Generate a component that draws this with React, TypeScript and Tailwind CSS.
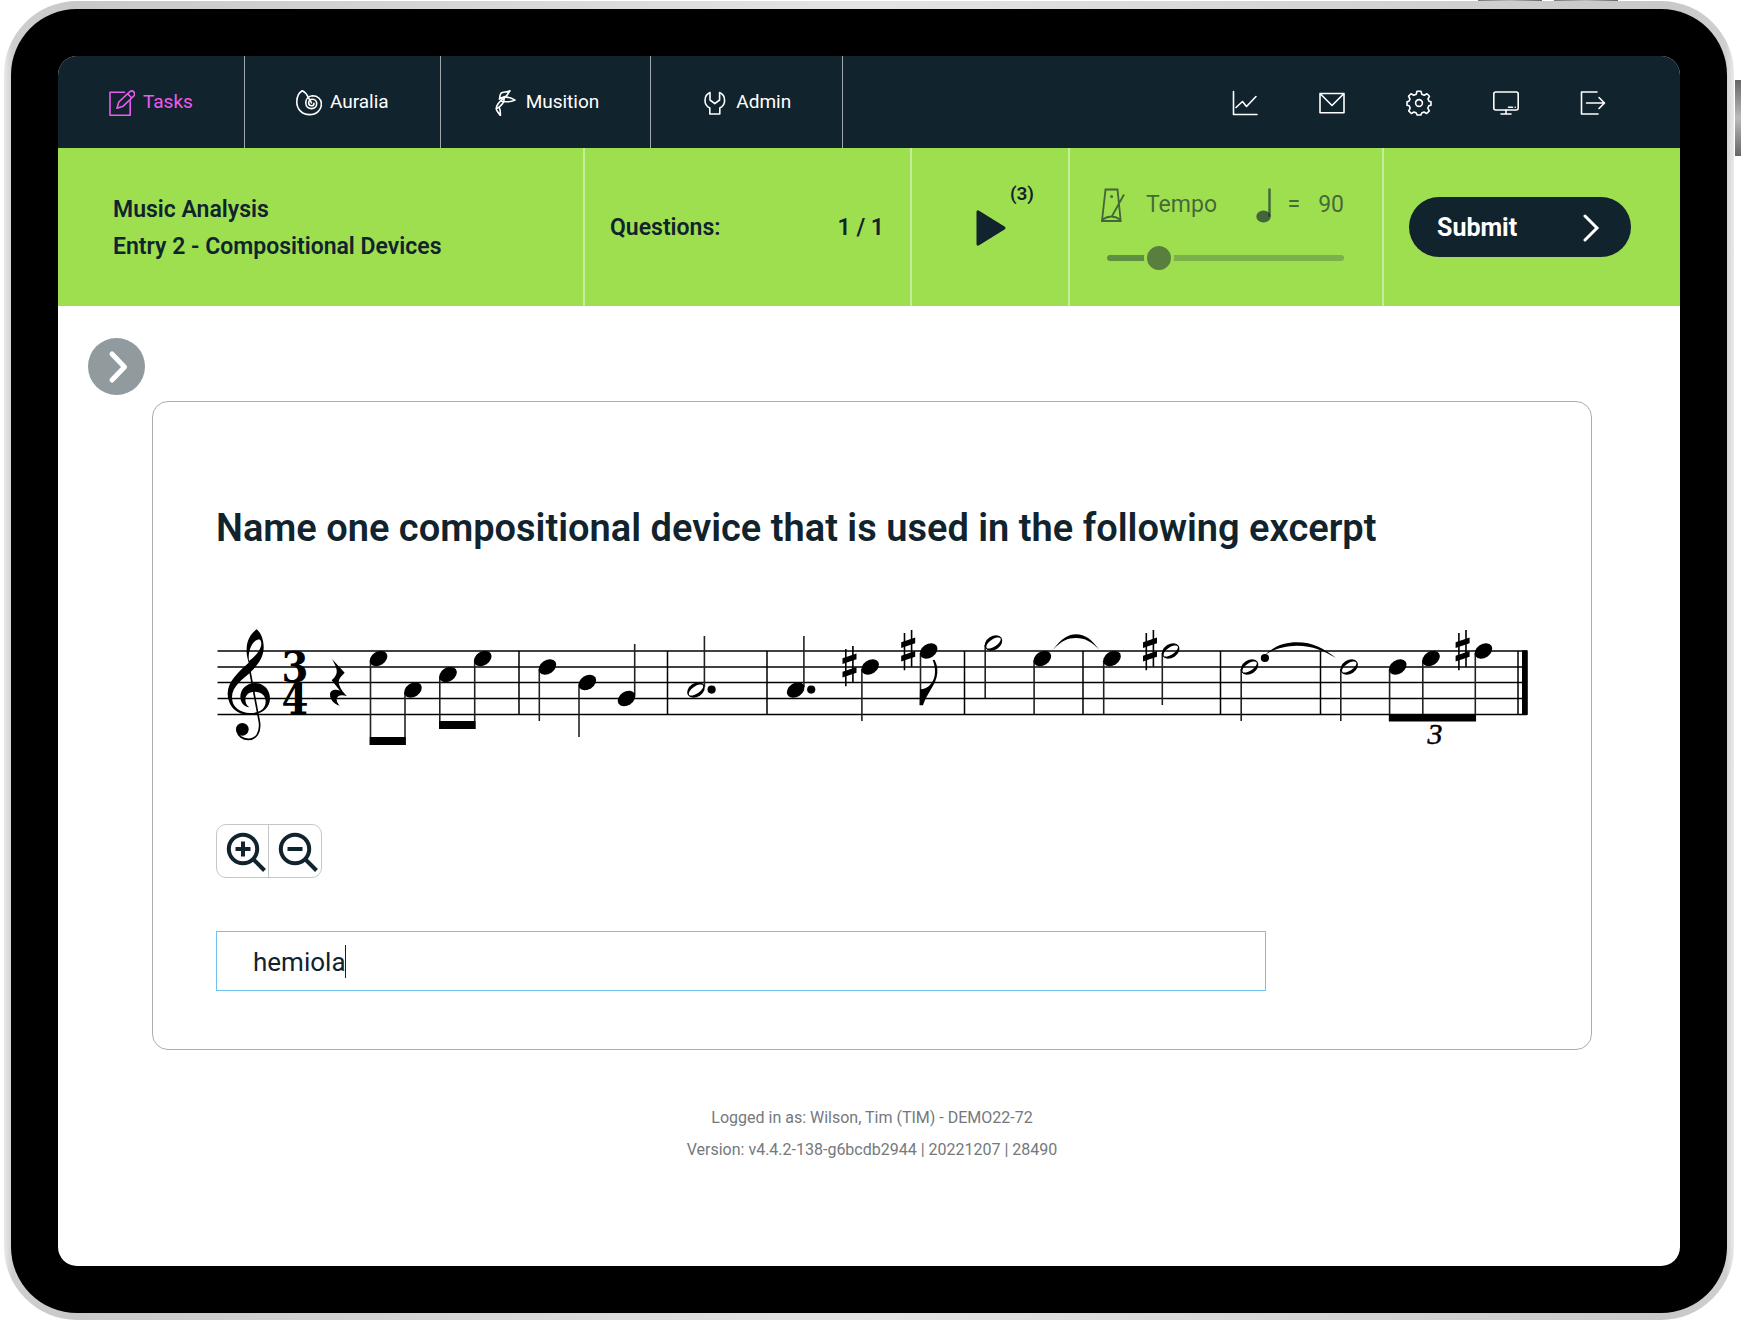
import { useState } from "react";
import type { ReactNode } from "react";

interface IconProps {
  children: ReactNode;
  className?: string;
}

function Icon({ children, className = "mt-0.5 size-[26px]" }: IconProps) {
  return (
    <svg
      viewBox="0 0 26 26"
      className={className}
      fill="none"
      stroke="currentColor"
      strokeWidth="1.6"
      strokeLinecap="round"
      strokeLinejoin="round"
      aria-hidden="true"
    >
      {children}
    </svg>
  );
}

const NAV_ITEMS = [
  {
    label: "Tasks",
    active: true,
    icon: (
      <Icon>
        <path d="M15.5 2.2H1V25.2H21.2V11" />
        <path d="M8 18.2 9.8 12 20.6 1.9a2.9 2.9 0 0 1 4.2 4.1L14.2 16.2ZM18.6 3.8l4.2 4.2" />
      </Icon>
    ),
  },
  {
    label: "Auralia",
    active: false,
    icon: (
      <Icon>
        <path d="M6.3.8C2 3 .8 8 .8 12c0 7.5 5.7 12.6 12.5 12.6 7.2 0 12.1-4.6 12.1-10.6 0-5-3.9-8.2-8.9-8.2-4 .2-6.7 3.2-6.7 7 0 3.8 2.7 5.8 5.7 5.8 3.5 0 5.2-2.6 5.2-5.2 0-2.6-2.2-4.2-4.5-4.2-2.2 0-3.5 1.6-3.5 3.6s1.3 3 2.9 3c1.4 0 2.3-1 2.3-2.4" />
        <path d="M6.3.8C9 2 10.6 4 12 6.8l3.5 6" />
      </Icon>
    ),
  },
  {
    label: "Musition",
    active: false,
    icon: (
      <Icon>
        <path d="M18 .8C14.5 2.6 11 1.4 9 3.2 7.4 5 8.2 7.6 7.4 9.2 9.6 7 12.4 7.2 14.4 6Z" />
        <path d="M9.4 8.2C14 6 19 7.6 23 10.1 19 12 14 12 9.6 11.2" />
        <path d="M14 6.4C9.6 9.6 3.6 14 4.3 19.2 4.8 22 7.2 23 8.4 25.6 8 22 9 19.6 7 17.6" />
        <path d="M12.2 8C12.4 13 9.6 16 4.6 18.6" />
      </Icon>
    ),
  },
  {
    label: "Admin",
    active: false,
    icon: (
      <Icon>
        <path d="M8 2.6V10l4.8 3.6L17.6 10V2.6C21 4 22.6 7 22.6 10.4c0 3.6-2 6.2-4.8 7.6v6H7.8v-6C5 16.6 3 14 3 10.4 3 7 4.6 4 8 2.6Z" />
      </Icon>
    ),
  },
];

const TOOL_ITEMS = [
  {
    label: "Reports",
    icon: (
      <Icon>
        <path d="M1.5 1.5V24.5H25M4 17.5l6.5-6 4 5L24 6.5" />
      </Icon>
    ),
  },
  {
    label: "Messages",
    icon: (
      <Icon>
        <path d="M1 3.5H25V22.8H1ZM1.5 4 13 15.5 24.5 4" />
      </Icon>
    ),
  },
  {
    label: "Settings",
    icon: (
      <Icon>
        <circle cx="13" cy="13" r="3.4" />
        <path d="M11 1.2h4l.8 3 2.4 1 2.8-1.5 2.5 2.5L22 9l1 2.2 2 .6v3.4l-2.2.6-1 2.4 1.5 2.7-2.6 2.6L18 22l-2.3 1-.8 2h-3.8l-.8-2-2.3-1-2.7 1.5-2.6-2.6L4.2 18.2l-1-2.4-2.2-.6v-3.4l2-.6L4 9 2.5 6.2 5 3.7 7.8 5.2l2.4-1Z" />
      </Icon>
    ),
  },
  {
    label: "Display",
    icon: (
      <Icon>
        <rect x=".8" y="2" width="24.4" height="18" rx="2" />
        <path d="M13 20v3.3M8 24h10M15.5 17.3h4M22.2 17.3h.1" />
      </Icon>
    ),
  },
  {
    label: "Log out",
    icon: (
      <Icon>
        <path d="M17 2H1.5V24H18M6.5 13H24M19 7.5l5.5 5.5-5.5 5.5" />
      </Icon>
    ),
  },
];

const STAFF_LINES = [651, 667, 682.5, 698.5, 714.5];
const BARLINES = [519, 667.5, 767, 964.5, 1083, 1220.5, 1320.5, 1518];

interface Note {
  x: number;
  y: number;
  stemX: number;
  stemEnd: number;
  half?: boolean;
}

const NOTES: Note[] = [
  { x: 378.5, y: 658.5, stemX: 370.5, stemEnd: 745 },
  { x: 413, y: 690, stemX: 405, stemEnd: 745 },
  { x: 448, y: 674.5, stemX: 439.8, stemEnd: 729 },
  { x: 482.7, y: 658.5, stemX: 474.7, stemEnd: 729 },
  { x: 547.5, y: 667, stemX: 539.3, stemEnd: 721 },
  { x: 587.3, y: 682.5, stemX: 579, stemEnd: 737 },
  { x: 626.5, y: 698.5, stemX: 634.7, stemEnd: 644 },
  { x: 696, y: 690, stemX: 704.4, stemEnd: 636, half: true },
  { x: 795.7, y: 690, stemX: 803.9, stemEnd: 636 },
  { x: 870.2, y: 667, stemX: 861.9, stemEnd: 721 },
  { x: 928.7, y: 651, stemX: 920.5, stemEnd: 705 },
  { x: 993.5, y: 643, stemX: 985.2, stemEnd: 698, half: true },
  { x: 1042.3, y: 658.5, stemX: 1034.1, stemEnd: 714 },
  { x: 1112, y: 658.5, stemX: 1103.7, stemEnd: 714 },
  { x: 1170.7, y: 651, stemX: 1162.3, stemEnd: 705, half: true },
  { x: 1249.6, y: 667, stemX: 1241.2, stemEnd: 721, half: true },
  { x: 1349.2, y: 667, stemX: 1340.8, stemEnd: 721, half: true },
  { x: 1397.8, y: 667, stemX: 1389.6, stemEnd: 721 },
  { x: 1431, y: 658.5, stemX: 1422.8, stemEnd: 721 },
  { x: 1483.5, y: 651, stemX: 1475.3, stemEnd: 721 },
];

const SHARPS = [
  { x: 849.5, y: 666 },
  { x: 908.2, y: 650 },
  { x: 1150, y: 650 },
  { x: 1462.6, y: 650 },
];

const DOTS = [
  { x: 711.6, y: 689.6 },
  { x: 811.2, y: 689.6 },
  { x: 1264.9, y: 658 },
];

function Score() {
  return (
    <svg
      viewBox="216 620 1313 140"
      className="block w-full"
      role="img"
      aria-label="Melody in three four time"
    >
      <g stroke="#000" strokeWidth="1.5">
        {STAFF_LINES.map((y) => (
          <line key={y} x1="217.5" x2="1527" y1={y} y2={y} />
        ))}
        {BARLINES.map((x) => (
          <line key={x} x1={x} x2={x} y1="651" y2="714.5" />
        ))}
      </g>
      <rect x="1522" y="650.4" width="5.8" height="64.5" />

      {/* treble clef and rest */}
      <g transform="translate(200 610) scale(.33333)">
        <path
          fillRule="evenodd"
          d="M170 58C184 70 192 92 191 115C190 145 172 166 152 186C130 207 96 228 96 262C96 292 120 309 150 309C178 309 197 298 197 274C197 257 184 245 163 245C147 245 136 256 136 268C136 279 140 287 148 292C132 290 121 278 121 260C121 238 140 219 165 219C192 219 210 240 210 265C210 295 185 315 148 315C108 315 83 287 83 250C83 215 115 186 146 158C141 140 139 130 140 118C140 95 150 72 170 58ZM147 153C143 125 155 92 177 88C188 92 184 110 178 120C170 134 160 143 147 153Z"
        />
        <path
          d="M149 180 178 335C183 368 168 388 145 388C128 388 114 378 111 362"
          fill="none"
          stroke="#000"
          strokeWidth="5"
        />
        <circle cx="127" cy="358" r="19" />
        <path d="M396 147 434 188C422 200 412 210 418 226C422 238 432 250 441 259C425 253 411 256 410 268C410 276 414 282 419 287C402 282 390 268 390 254C390 241 404 236 420 242L395 211C407 200 412 190 410 180C408 168 402 158 396 147Z" />
      </g>

      <g
        className="font-['DejaVu_Serif_Condensed','Liberation_Serif',serif] font-bold"
        fontSize="43"
        textAnchor="middle"
      >
        <text x="295" y="682">
          3
        </text>
        <text x="295" y="714">
          4
        </text>
      </g>

      {NOTES.map((note) => (
        <g key={note.x}>
          <line
            x1={note.stemX}
            x2={note.stemX}
            y1={note.y + (note.stemEnd > note.y ? 2 : -3)}
            y2={note.stemEnd}
            stroke="#222"
            strokeWidth="1.6"
          />
          <path
            transform={`translate(${note.x} ${note.y}) rotate(-34)`}
            fillRule="evenodd"
            d={
              note.half
                ? "M-9.6 0a9.6 6.85 0 1 0 19.2 0a9.6 6.85 0 1 0-19.2 0ZM-8.4 0a8.4 3.7 0 1 0 16.8 0a8.4 3.7 0 1 0-16.8 0Z"
                : "M-9.6 0a9.6 6.85 0 1 0 19.2 0a9.6 6.85 0 1 0-19.2 0Z"
            }
          />
        </g>
      ))}

      {/* beams */}
      <rect x="369.7" y="737" width="36" height="8" />
      <rect x="439" y="721" width="36.5" height="8" />
      <rect x="1389" y="714" width="87" height="7.5" />

      {SHARPS.map((sharp) => (
        <g key={sharp.x} transform={`translate(${sharp.x} ${sharp.y})`}>
          <path d="M-3.7-17V20.3M3.4-20V17" stroke="#000" strokeWidth="1.6" />
          <path d="M-7-7.8 7-12.5V-6.8L-7-2ZM-7 5.7 7 1V6.7L-7 11.5Z" />
        </g>
      ))}
      {DOTS.map((dot) => (
        <circle key={dot.x} cx={dot.x} cy={dot.y} r="4.1" />
      ))}

      {/* flag and ties */}
      <g transform="translate(800 610) scale(.33333)">
        <path d="M360 238C385 238 405 215 405 185C405 172 403 162 398 150L404 150C410 162 413 172 412 188C410 222 380 250 369 286L359 286Z" />
        <path d="M758 120C785 85 805 73 828 73C855 73 875 88 898 120C875 95 855 84 828 84C803 84 785 92 758 120Z" />
        <path d="M1395 135C1425 105 1460 97 1490 97C1540 97 1570 115 1608 144C1570 122 1540 108 1490 107C1455 108 1425 115 1395 135Z" />
      </g>
      <text
        x="1435"
        y="744"
        textAnchor="middle"
        fontSize="30"
        stroke="#000"
        strokeWidth=".5"
        className="font-['Liberation_Serif',serif] italic"
      >
        3
      </text>
    </svg>
  );
}

function TopNav() {
  return (
    <header className="flex h-[92px] bg-[#11232d] text-[19px] text-white">
      <nav className="flex">
        {NAV_ITEMS.map((item) => (
          <a
            key={item.label}
            href="#"
            className={`flex items-center gap-2 border-r border-[#a0a7ab] px-[51px] ${
              item.active ? "text-[#ea5cf0]" : ""
            }`}
          >
            {item.icon}
            {item.label}
          </a>
        ))}
      </nav>
      <div className="ml-auto flex items-center gap-[61px] pr-[74px]">
        {TOOL_ITEMS.map((item) => (
          <button key={item.label} type="button" aria-label={item.label}>
            {item.icon}
          </button>
        ))}
      </div>
    </header>
  );
}

function TaskBar() {
  const [tempo, setTempo] = useState(90);

  return (
    <section className="grid h-[158px] grid-cols-[527fr_327fr_158fr_314fr_296fr] divide-x-2 divide-[#c6ee98] bg-[#9edf50] text-[23px] font-semibold text-[#11232d]">
      <div className="flex flex-col justify-center pt-0.5 pl-[55px] leading-[37px]">
        <p>Music Analysis</p>
        <p>Entry 2 - Compositional Devices</p>
      </div>
      <div className="flex items-center justify-between pt-0.5 pr-[26px] pl-[25px]">
        <span>Questions:</span>
        <span>1 / 1</span>
      </div>
      <div className="relative flex items-center justify-center pt-0.5 pl-0.5">
        <button type="button" aria-label="Play">
          <svg viewBox="0 0 30 36" className="h-9 w-[30px]" fill="currentColor" aria-hidden="true">
            <path d="M.5 2.2Q.5-.8 3.5 1L28.5 16.5Q30.5 18 28.5 19.5L3.5 35Q.5 36.8.5 33.8Z" />
          </svg>
        </button>
        <span className="absolute top-8 right-[34px] text-[19px] leading-7">(3)</span>
      </div>
      <div className="flex flex-col gap-8 pt-[39px] pr-[38px] pl-[31px] font-normal text-[#11232d]/65">
        <div className="flex items-center">
          <svg
            viewBox="0 0 24 36"
            className="h-9 w-6"
            fill="none"
            stroke="currentColor"
            strokeWidth="1.8"
            aria-hidden="true"
          >
            <path d="M4.5 2.5H16.5L19.7 34H1ZM10.5 30 23 7.5M1.5 32.5Q10.5 26.5 19 32.5" />
            <circle cx="10.6" cy="9.5" r=".6" />
          </svg>
          <label htmlFor="tempo" className="ml-[21px]">
            Tempo
          </label>
          <svg viewBox="0 0 16 36" className="ml-auto h-9 w-4" fill="currentColor" aria-hidden="true">
            <ellipse cx="7.5" cy="29.5" rx="7.2" ry="6" />
            <path d="M12.3 1.5H14.7V29.5H12.3Z" />
          </svg>
          <span className="ml-4">=</span>
          <output htmlFor="tempo" className="ml-[18px]">
            {tempo}
          </output>
        </div>
        <input
          id="tempo"
          type="range"
          min={40}
          max={320}
          value={tempo}
          onChange={(event) => setTempo(Number(event.target.value))}
          className="ml-1.5 h-[6px] appearance-none rounded-full bg-linear-to-r from-[#5f8f40] from-22% to-[#7cb04b] to-22% [&::-webkit-slider-thumb]:size-[30px] [&::-webkit-slider-thumb]:appearance-none [&::-webkit-slider-thumb]:rounded-full [&::-webkit-slider-thumb]:border-3 [&::-webkit-slider-thumb]:border-[#9edf50] [&::-webkit-slider-thumb]:bg-[#587f3e]"
        />
      </div>
      <div className="flex items-center pl-[25px]">
        <button
          type="button"
          className="flex h-[60px] w-[222px] items-center justify-between rounded-full bg-[#11232d] pt-0.5 pr-[31px] pl-7 text-[25px] font-bold text-white"
        >
          Submit
          <svg viewBox="0 0 18 28" className="h-7 w-[18px]" fill="none" stroke="currentColor" strokeWidth="3" aria-hidden="true">
            <path d="M3 2 15 14 3 26" strokeLinecap="round" />
          </svg>
        </button>
      </div>
    </section>
  );
}

function ZoomControls() {
  return (
    <div className="inline-flex divide-x divide-[#c4c7c9] rounded-[10px] border border-[#c4c7c9]">
      {["Zoom in", "Zoom out"].map((label) => (
        <button key={label} type="button" aria-label={label} className="size-[52px] text-[#11232d]">
          <svg viewBox="0 0 52 52" className="size-[52px]" fill="none" stroke="currentColor" strokeWidth="4" aria-hidden="true">
            <circle cx="26" cy="24" r="14.2" />
            <path d="M36.5 34.5 47.5 45.5" />
            <path d={label === "Zoom in" ? "M18.5 24H33.5M26 16.5V31.5" : "M18.5 24H33.5"} />
          </svg>
        </button>
      ))}
    </div>
  );
}

function QuestionCard() {
  const [answer, setAnswer] = useState("hemiola");

  return (
    <article className="rounded-2xl border border-[#a6aeb3] pt-24 pr-[62px] pb-[58px] pl-[63px]">
      <h1 className="text-[38px] leading-[60px] font-semibold">
        Name one compositional device that is used in the following excerpt
      </h1>
      <div className="mt-[62px]">
        <Score />
      </div>
      <div className="mt-16">
        <ZoomControls />
      </div>
      <div className="relative mt-[47px] w-4/5">
        <input
          type="text"
          aria-label="Answer"
          value={answer}
          onChange={(event) => setAnswer(event.target.value)}
          className="block h-[60px] w-full border border-[#6fc3ec] px-9 pt-0.5 text-[26px] caret-transparent outline-none"
        />
        <span className="absolute top-3.5 left-[129px] h-[33px] w-px bg-[#11232d]" />
      </div>
    </article>
  );
}

export default function App() {
  return (
    <div className="relative flex min-h-screen overflow-hidden bg-white pt-px pr-[7px] pb-0.5 pl-1 font-[Roboto,sans-serif] text-[#11232d]">
      <span className="absolute top-0 right-[199px] h-[3px] w-16 bg-linear-to-r from-[#777] via-[#bbb] to-[#666]" />
      <span className="absolute top-0 right-[123px] h-[3px] w-16 bg-linear-to-r from-[#777] via-[#bbb] to-[#666]" />
      <span className="absolute top-20 right-0 h-[76px] w-[6px] bg-linear-to-b from-[#666] via-[#bbb] to-[#666]" />
      <div className="relative flex flex-1 rounded-[73px] bg-[linear-gradient(to_right,#eaeaea,#cfcfcf_8px,#c8c8c8_4%,#e4e4e4_50%,#c8c8c8_96%,#cfcfcf_calc(100%-8px),#eaeaea)] p-[7px] pt-2">
        <div className="flex flex-1 rounded-[66px] bg-black p-[47px]">
          <main className="flex-1 overflow-hidden rounded-[19px] bg-white">
            <TopNav />
            <TaskBar />
            <div className="px-[30px] pt-8">
              <button
                type="button"
                aria-label="Open sidebar"
                className="flex size-[57px] items-center justify-center rounded-full bg-[#919a9e] pl-[3px] text-white"
              >
                <svg viewBox="0 0 20 34" className="h-[34px] w-5" fill="none" stroke="currentColor" strokeWidth="5" aria-hidden="true">
                  <path d="M4 4 16.5 17 4 30" strokeLinecap="round" strokeLinejoin="round" />
                </svg>
              </button>
            </div>
            <div className="mt-1.5 mr-[88px] ml-[94px]">
              <QuestionCard />
              <footer className="mt-[52px] text-center text-base leading-8 text-[#74797c]">
                <p>Logged in as: Wilson, Tim (TIM) - DEMO22-72</p>
                <p>Version: v4.4.2-138-g6bcdb2944 | 20221207 | 28490</p>
              </footer>
            </div>
          </main>
        </div>
      </div>
    </div>
  );
}
